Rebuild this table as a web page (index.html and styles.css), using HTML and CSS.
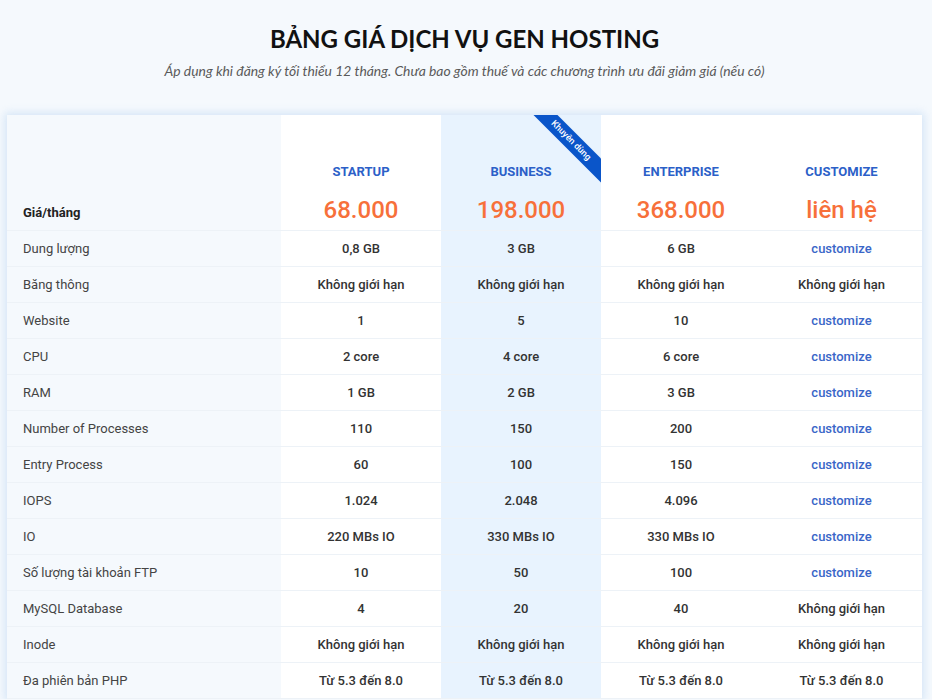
FILE: index.html
```html
<!DOCTYPE html>
<html lang="vi">
<head>
<meta charset="utf-8">
<title>Bảng giá dịch vụ Gen Hosting</title>
<link rel="stylesheet" href="styles.css">
</head>
<body>
<section class="pricing">
  <header class="intro">
    <h1 class="title">BẢNG GIÁ DỊCH VỤ GEN HOSTING</h1>
    <p class="subtitle">Áp dụng khi đăng ký tối thiểu 12 tháng. Chưa bao gồm thuế và các chương trình ưu đãi giảm giá (nếu có)</p>
  </header>
  <div class="card">
    <table class="plans">
      <colgroup>
        <col class="c-label"><col class="c-plan"><col class="c-plan c-hot"><col class="c-plan"><col class="c-last">
      </colgroup>
      <thead>
        <tr class="head">
          <th class="label strong">Giá/tháng</th>
          <th class="plan"><div class="name">STARTUP</div><div class="price">68.000</div></th>
          <th class="plan hot"><span class="ribbon">Khuyên dùng</span><div class="name">BUSINESS</div><div class="price">198.000</div></th>
          <th class="plan"><div class="name">ENTERPRISE</div><div class="price">368.000</div></th>
          <th class="plan"><div class="name">CUSTOMIZE</div><div class="price">liên hệ</div></th>
        </tr>
      </thead>
      <tbody>
        <tr><td class="label">Dung lượng</td><td>0,8 GB</td><td class="hot">3 GB</td><td>6 GB</td><td class="link">customize</td></tr>
        <tr><td class="label">Băng thông</td><td>Không giới hạn</td><td class="hot">Không giới hạn</td><td>Không giới hạn</td><td>Không giới hạn</td></tr>
        <tr><td class="label">Website</td><td>1</td><td class="hot">5</td><td>10</td><td class="link">customize</td></tr>
        <tr><td class="label">CPU</td><td>2 core</td><td class="hot">4 core</td><td>6 core</td><td class="link">customize</td></tr>
        <tr><td class="label">RAM</td><td>1 GB</td><td class="hot">2 GB</td><td>3 GB</td><td class="link">customize</td></tr>
        <tr><td class="label">Number of Processes</td><td>110</td><td class="hot">150</td><td>200</td><td class="link">customize</td></tr>
        <tr><td class="label">Entry Process</td><td>60</td><td class="hot">100</td><td>150</td><td class="link">customize</td></tr>
        <tr><td class="label">IOPS</td><td>1.024</td><td class="hot">2.048</td><td>4.096</td><td class="link">customize</td></tr>
        <tr><td class="label">IO</td><td>220 MBs IO</td><td class="hot">330 MBs IO</td><td>330 MBs IO</td><td class="link">customize</td></tr>
        <tr><td class="label">Số lượng tài khoản FTP</td><td>10</td><td class="hot">50</td><td>100</td><td class="link">customize</td></tr>
        <tr><td class="label">MySQL Database</td><td>4</td><td class="hot">20</td><td>40</td><td>Không giới hạn</td></tr>
        <tr><td class="label">Inode</td><td>Không giới hạn</td><td class="hot">Không giới hạn</td><td>Không giới hạn</td><td>Không giới hạn</td></tr>
        <tr><td class="label">Đa phiên bản PHP</td><td>Từ 5.3 đến 8.0</td><td class="hot">Từ 5.3 đến 8.0</td><td>Từ 5.3 đến 8.0</td><td>Từ 5.3 đến 8.0</td></tr>
      </tbody>
    </table>
  </div>
</section>
</body>
</html>
```
FILE: styles.css
```css
* { box-sizing: border-box; }
html, body { margin: 0; padding: 0; }
body {
  background: #f5f9fd;
  font-family: Roboto, "Noto Sans", Arial, sans-serif;
  color: #333;
  overflow: hidden;
}
.pricing {
  padding: 24px 10px 0 7px;
}
.intro {
  text-align: center;
}
.title {
  margin: 0;
  font-family: Lato, "Open Sans", sans-serif;
  font-weight: 700;
  font-size: 24px;
  line-height: 30px;
  color: #111;
}
.subtitle {
  margin: 8px 0 0;
  font-family: Lato, "Open Sans", sans-serif;
  font-style: italic;
  font-size: 13.9px;
  line-height: 18px;
  color: #5a5a5a;
}
.card {
  margin-top: 35px;
  width: 915px;
  background: #fff;
  box-shadow: 0 0 8px 2px rgba(170, 205, 240, 0.45);
}
.plans {
  width: 915px;
  border-collapse: collapse;
  table-layout: fixed;
}
.c-label { width: 274px; }
.c-plan { width: 160px; }
.c-last { width: 161px; }
.plans td, .plans th {
  height: 36px;
  padding: 0 8px;
  border-bottom: 1px solid #edf2f7;
  text-align: center;
  font-size: 13px;
  font-weight: 500;
  color: #333;
}
.plans .label {
  background: #f5f9fd;
  text-align: left;
  padding-left: 16px;
  font-weight: 400;
  color: #444;
}
.plans .label.strong {
  font-weight: 700;
  color: #222;
  padding-bottom: 10px;
}
.plans .hot { background: #e8f3fe; }
.plans .link { color: #3a66c8; }
.head th {
  height: 115px;
  vertical-align: bottom;
  padding-bottom: 5px;
}
.head .plan { position: relative; overflow: hidden; }
.name {
  font-size: 13px;
  line-height: 16px;
  font-weight: 700;
  color: #2c5fc8;
}
.price {
  margin-top: 15px;
  font-size: 24px;
  line-height: 30px;
  font-weight: 500;
  color: #f7703a;
}
.ribbon {
  position: absolute;
  top: 17px;
  right: -25px;
  width: 110px;
  height: 17px;
  line-height: 17px;
  background: #0a55c9;
  color: #fff;
  font-size: 9px;
  font-weight: 500;
  text-align: center;
  transform: rotate(45deg);
}
```
